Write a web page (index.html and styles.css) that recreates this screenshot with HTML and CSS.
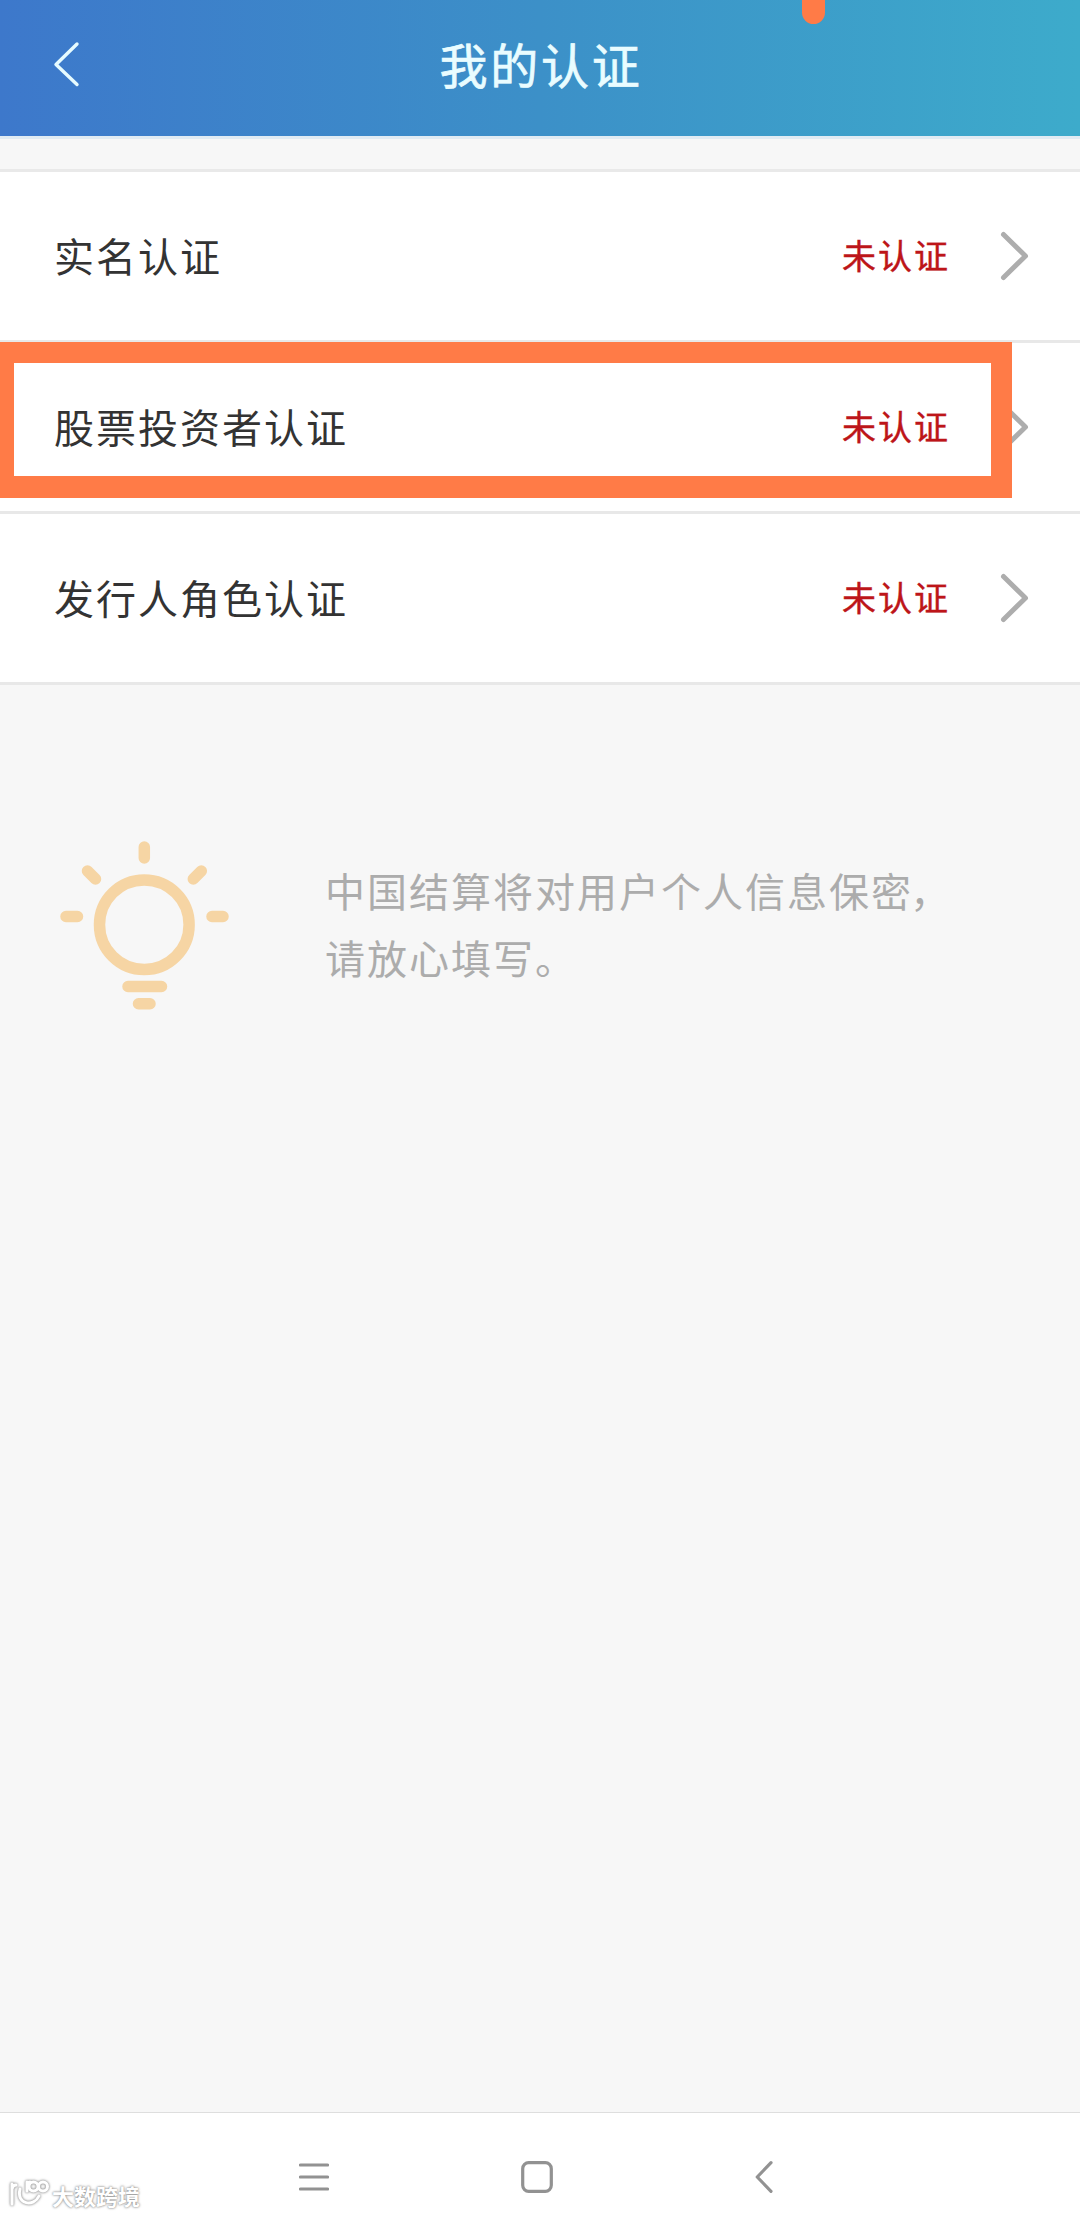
FILE: index.html
```html
<!DOCTYPE html>
<html lang="zh-CN">
<head>
    <meta charset="utf-8">
    <title>我的认证</title>
    <link rel="stylesheet" href="styles.css">
</head>
<body>
    <div class="page">
        <header class="header">
            <svg class="back" viewBox="0 0 30 48">
                <path d="M27 4L6 24.500l21 20"/>
            </svg>
            <h1 class="title">我的认证</h1>
            <span class="tab"></span>
        </header>

        <ul class="list">
            <li class="item">
                <span class="name">实名认证</span>
                <span class="status">未认证</span>
                <svg class="arrow" viewBox="0 0 30 52"><path d="M3.500 5.500L25.500 27 3.500 48.500"/></svg>
            </li>
            <li class="item">
                <span class="name">股票投资者认证</span>
                <span class="status">未认证</span>
                <svg class="arrow" viewBox="0 0 30 52"><path d="M3.500 5.500L25.500 27 3.500 48.500"/></svg>
                <span class="highlight"></span>
            </li>
            <li class="item">
                <span class="name">发行人角色认证</span>
                <span class="status">未认证</span>
                <svg class="arrow" viewBox="0 0 30 52"><path d="M3.500 5.500L25.500 27 3.500 48.500"/></svg>
            </li>
        </ul>

        <div class="tip">
            <svg class="bulb" viewBox="60 840 169 170">
                <circle cx="144.3" cy="924.7" r="44.8"/>
                <path d="M144.3 847v11M66 916.5h11.500M212 916.5h11M87.500 871l8 8M201.300 871l-8 8M128 986.5h33.500M138.500 1003.700h11.500"/>
            </svg>
            <p class="tip-text">中国结算将对用户个人信息保密<span class="comma">，</span><br>请放心填写。</p>
        </div>

        <footer class="navbar">
            <svg class="menu" viewBox="0 0 30 30"><path d="M1.500 3h27M1.500 15h27M1.500 27h27"/></svg>
            <svg class="home" viewBox="0 0 32 32"><rect x="1.700" y="1.700" width="28.600" height="28.600" rx="6"/></svg>
            <svg class="prev" viewBox="0 0 18 32"><path d="M16 1.700L2.200 16 16 30.300"/></svg>
            <div class="watermark">
                <svg class="mark" viewBox="0 0 40 28">
                    <path d="M3 5v20M3 10q1-4 4-4M11 10c-4 16 14 18 19 7M18 3v9M18 6q1-3 3-3"/>
                    <circle cx="24.500" cy="7.500" r="4.500"/>
                    <circle cx="34" cy="7.500" r="4.500"/>
                </svg>
                <span>大数跨境</span>
            </div>
        </footer>
    </div>
</body>
</html>
```
FILE: styles.css
```css
* {
  box-sizing: border-box;
}
body {
  margin: 0;
  background-color: #f7f7f7;
  font-family: "Noto Sans CJK SC", sans-serif;
}
svg {
  display: block;
  flex: none;
  fill: none;
  stroke-linecap: round;
  stroke-linejoin: round;
}
.page {
  display: flex;
  flex-direction: column;
  height: 2216px;
  overflow: hidden;
}

.header {
  position: relative;
  display: flex;
  align-items: center;
  height: 139px;
  padding: 0 50px;
  border-bottom: 3px solid #e0ebf3;
  background: linear-gradient(to right, #3d78cb, #3c90c8 50%, #3dabcb) padding-box;
}
.back {
  width: 30px;
  height: 48px;
  margin-top: -8px;
  stroke: #e6fbff;
  stroke-width: 3.4;
}
.title {
  flex: 1;
  margin: -11px 28px 0 0;
  color: #e9fcff;
  font-size: 48px;
  font-weight: 400;
  line-height: 72px;
  letter-spacing: 2.7px;
  text-align: center;
  -webkit-text-stroke: 0.7px #e9fcff;
}
.tab {
  position: absolute;
  top: 0;
  left: 802px;
  width: 23px;
  height: 24px;
  border-radius: 0 0 12px 12px;
  background-color: #ff7b47;
}

.list {
  margin: 30px 0 0;
  padding: 0;
  border-top: 3px solid #e9e9e9;
  list-style: none;
}
.item {
  position: relative;
  display: flex;
  align-items: center;
  height: 171px;
  padding: 0 50px 3px 54px;
  border-bottom: 3px solid #e8e8e8;
  background-color: #fff;
}
.name {
  flex: 1;
  color: #333;
  font-size: 40px;
  letter-spacing: 2px;
}
.status {
  margin-right: 50px;
  color: #bd1519;
  font-size: 34px;
  letter-spacing: 2px;
  -webkit-text-stroke: 0.4px #bd1519;
}
.arrow {
  width: 30px;
  height: 52px;
  stroke: #adadad;
  stroke-width: 5;
}
.highlight {
  position: absolute;
  top: -1px;
  left: 0;
  width: 1012px;
  height: 156px;
  border: solid #ff7b47;
  border-width: 21px 21px 22px 14px;
}

.tip {
  display: flex;
  flex: 1;
  align-items: flex-start;
  padding: 155px 60px 0;
}
.bulb {
  width: 169px;
  height: 170px;
  stroke: #f6d5a4;
  stroke-width: 11.5;
}
.tip-text {
  margin: 17px 0 0 96px;
  color: #acacac;
  font-size: 40px;
  line-height: 67px;
  letter-spacing: 2px;
  white-space: nowrap;
}
.comma {
  margin-left: -3px;
}

.navbar {
  position: relative;
  display: flex;
  align-items: center;
  height: 104px;
  padding: 24px 307px 0 299px;
  justify-content: space-between;
  border-top: 1px solid #dedede;
  background-color: #fff;
  stroke: #929292;
  stroke-width: 3.2;
}
.menu {
  width: 30px;
  height: 30px;
}
.home {
  width: 32px;
  height: 32px;
  margin-right: 11px;
}
.prev {
  width: 18px;
  height: 32px;
}
.watermark {
  position: absolute;
  bottom: 5px;
  left: 9px;
  display: flex;
  align-items: center;
  gap: 3px;
  color: #fff;
  font-size: 22px;
  font-weight: 700;
  line-height: 32px;
  text-shadow: 0 0 2px #888, 0 0 3px #aaa;
}
.mark {
  width: 40px;
  height: 28px;
  margin-top: -5px;
  stroke: #fff;
  stroke-width: 3;
  filter: drop-shadow(0 0 1px #999) drop-shadow(0 0 1px #bbb);
}
```
